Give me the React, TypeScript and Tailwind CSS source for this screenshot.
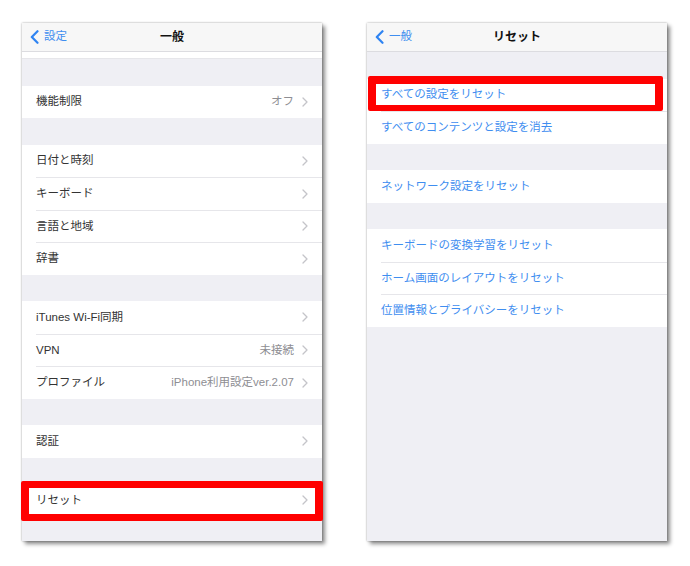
import React from 'react'

type Row = { label: string; value?: string; chevron?: boolean; mark?: boolean }

const font = "font-['Liberation_Sans','Noto_Sans_CJK_JP',sans-serif]"

const Chevron = () => (
  <svg width="6" height="10" viewBox="0 0 6 10" className="shrink-0">
    <polyline points="1,1 5,5 1,9" fill="none" stroke="#c4c4c9" strokeWidth="1.3" strokeLinecap="round" strokeLinejoin="round" />
  </svg>
)

const BackArrow = () => (
  <svg width="9" height="14" viewBox="0 0 9 14" className="shrink-0">
    <polyline points="7.5,1.2 1.8,7 7.5,12.8" fill="none" stroke="#2f84f2" strokeWidth="2.2" strokeLinecap="round" strokeLinejoin="round" />
  </svg>
)

const NavBar = ({ back, title }: { back: string; title: string }) => (
  <div className="relative flex h-[29px] shrink-0 items-center border-b border-[#dcdce0] bg-[#f7f7f7] pl-[8px]">
    <div className="flex items-center gap-[5px]">
      <BackArrow />
      <span className="text-[11.5px] text-[#3f8ef0]">{back}</span>
    </div>
    <div className="absolute inset-0 flex items-center justify-center text-[12px] font-bold text-[#111]">{title}</div>
  </div>
)

const Gap = () => <div className="h-[26.5px] shrink-0" />

const Group = ({ rows, blue, redClass }: { rows: Row[]; blue?: boolean; redClass?: string }) => (
  <div className="shrink-0 bg-white">
    {rows.map((r, i) => (
      <div key={r.label} className="relative h-[32.5px] pl-[14px]">
        <div className={`flex h-full items-center pr-[14px] ${i > 0 ? 'border-t border-[#e6e6ea]' : ''}`}>
          <span className={`flex-1 text-[11.5px] ${blue ? 'text-[#3f8ef0]' : 'text-[#333]'}`}>{r.label}</span>
          {r.value && <span className="mr-[8px] text-[11.5px] text-[#8e8e93]">{r.value}</span>}
          {r.chevron && <Chevron />}
        </div>
        {r.mark && <div className={`pointer-events-none absolute rounded-[2px] border-[#ff0000] ${redClass}`} />}
      </div>
    ))}
  </div>
)

const Phone = ({ children }: { children: React.ReactNode }) => (
  <div className="flex h-[518px] w-[300px] flex-col bg-[#efeff4] shadow-[0_0_2px_rgba(0,0,0,0.35),3px_3px_4px_rgba(0,0,0,0.45)]">
    {children}
  </div>
)

export default function App() {
  return (
    <div className={`flex h-[566px] w-[690px] gap-[45px] bg-white pl-[22px] pt-[23px] ${font}`}>
      <Phone>
        <NavBar back="設定" title="一般" />
        <div className="h-[7px] shrink-0 border-b border-[#e6e6ea] bg-white" />
        <Gap />
        <Group rows={[{ label: '機能制限', value: 'オフ', chevron: true }]} />
        <Gap />
        <Group
          rows={[
            { label: '日付と時刻', chevron: true },
            { label: 'キーボード', chevron: true },
            { label: '言語と地域', chevron: true },
            { label: '辞書', chevron: true },
          ]}
        />
        <Gap />
        <Group
          rows={[
            { label: 'iTunes Wi-Fi同期', chevron: true },
            { label: 'VPN', value: '未接続', chevron: true },
            { label: 'プロファイル', value: 'iPhone利用設定ver.2.07', chevron: true },
          ]}
        />
        <Gap />
        <Group rows={[{ label: '認証', chevron: true }]} />
        <Gap />
        <Group
          rows={[{ label: 'リセット', chevron: true, mark: true }]}
          redClass="-left-[1px] -right-[1px] -top-[3px] -bottom-[4px] border-x-[8px] border-y-[7px]"
        />
      </Phone>
      <Phone>
        <NavBar back="一般" title="リセット" />
        <Gap />
        <Group
          blue
          rows={[
            { label: 'すべての設定をリセット', mark: true },
            { label: 'すべてのコンテンツと設定を消去' },
          ]}
          redClass="left-[1px] right-[4px] -top-[2.5px] bottom-0 border-x-[8px] border-t-[8px] border-b-[6px]"
        />
        <Gap />
        <Group blue rows={[{ label: 'ネットワーク設定をリセット' }]} />
        <Gap />
        <Group
          blue
          rows={[
            { label: 'キーボードの変換学習をリセット' },
            { label: 'ホーム画面のレイアウトをリセット' },
            { label: '位置情報とプライバシーをリセット' },
          ]}
        />
      </Phone>
    </div>
  )
}
